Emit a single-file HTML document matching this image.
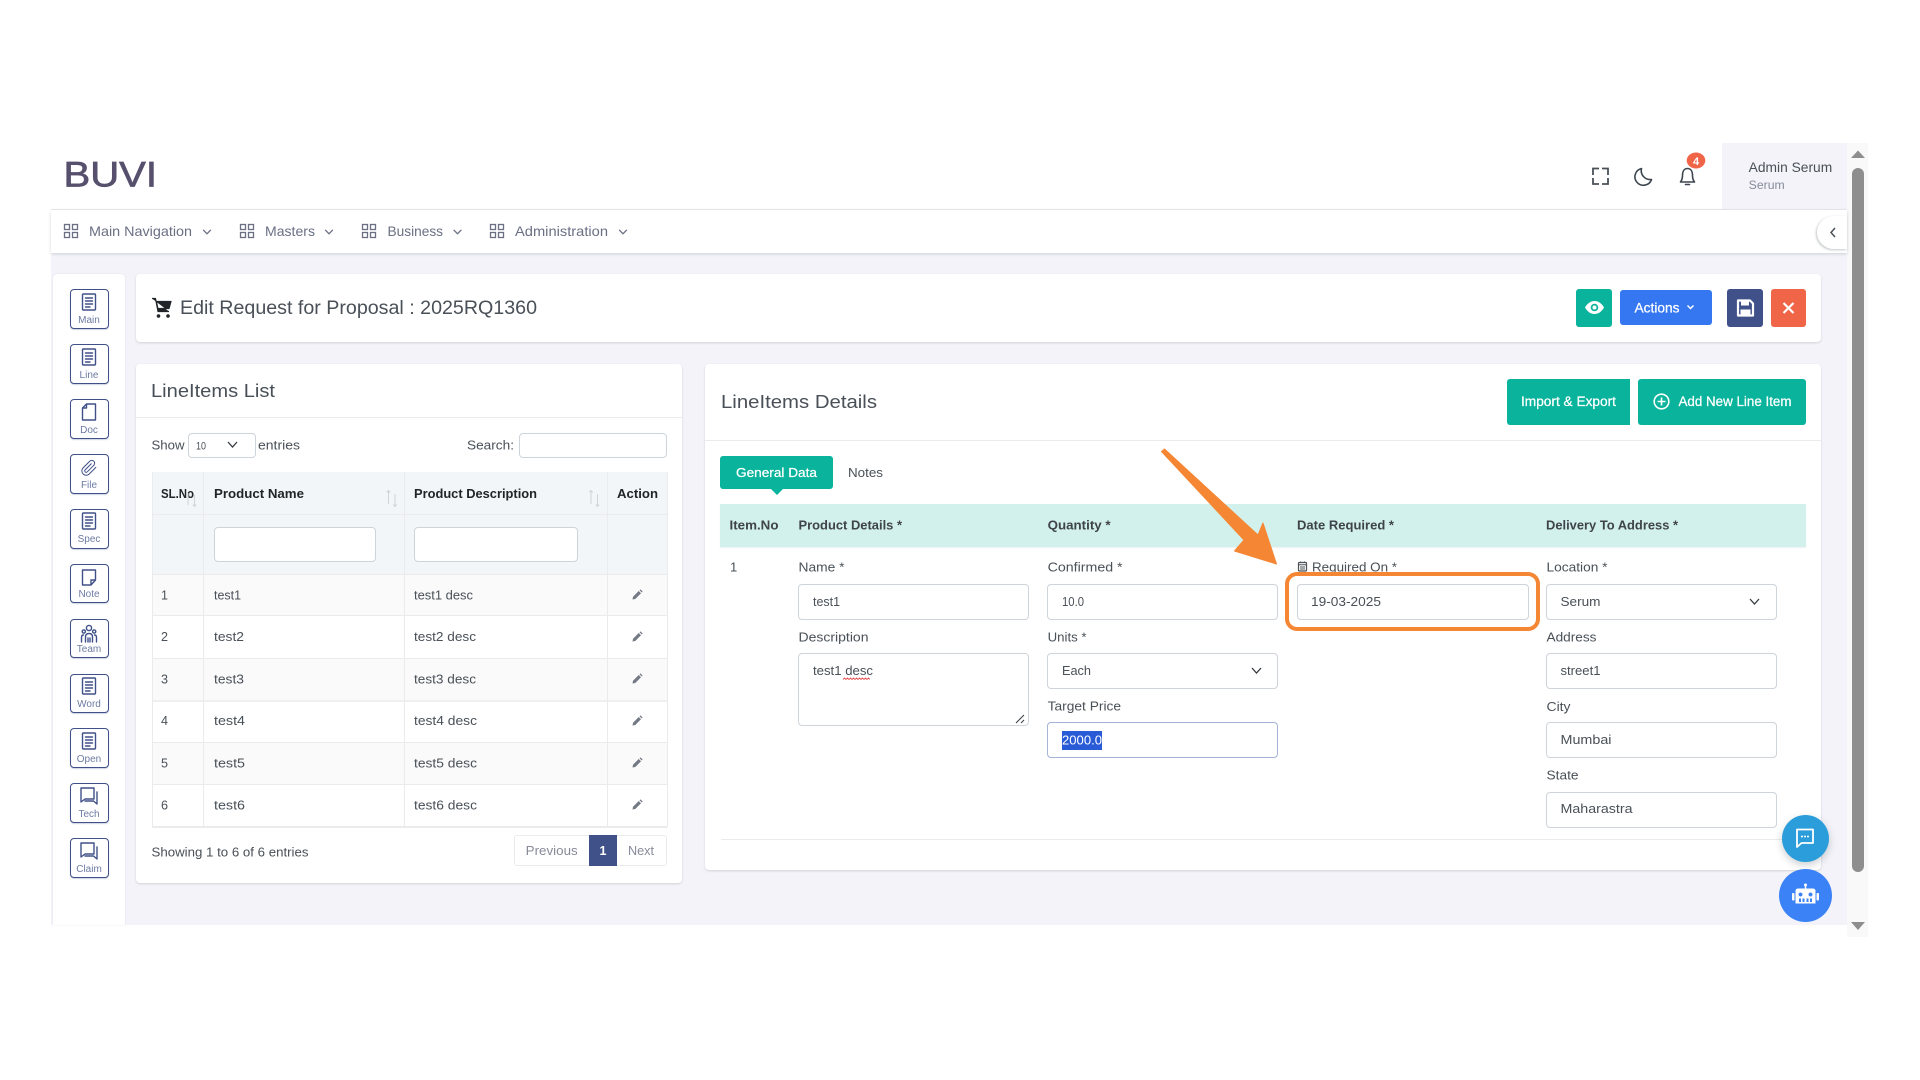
<!DOCTYPE html>
<html lang="en"><head><meta charset="utf-8"><title>Edit Request for Proposal</title>
<style>
html,body{margin:0;padding:0;width:1920px;height:1080px;background:#fff;overflow:hidden;font-family:"Liberation Sans",sans-serif}
.b{position:absolute;box-sizing:border-box}
.card{background:#fff;border-radius:4px;box-shadow:0 1px 2px rgba(56,65,74,.18)}
.in{background:#fff;border:1px solid #ced4da;border-radius:4px}
.sb{background:#fff;border:1.5px solid #405189;border-radius:4px;left:69.5px;width:39px;height:39.5px;box-shadow:0 1px 1px rgba(64,81,137,.25)}
svg{position:absolute;left:0;top:0}
text{font-family:"Liberation Sans",sans-serif}
.nav{font-size:14px;fill:#6a6f84}
.lbl{font-size:13px;fill:#495057}
.val{font-size:13px;fill:#495057}
.th{font-size:12.5px;font-weight:700;fill:#212529}
.td{font-size:12.5px;fill:#495057}
.gh{font-size:13px;font-weight:700;fill:#3f444a}
.sl{font-size:10px;fill:#6d7ba3;text-anchor:middle}
.ic{fill:none;stroke:#405189;stroke-width:1.4;stroke-linecap:round;stroke-linejoin:round}
.gr{fill:none;stroke:#6a6f84;stroke-width:1.3}
.ch{fill:none;stroke:#6a6f84;stroke-width:1.3;stroke-linecap:round;stroke-linejoin:round}
.h{font-size:18.5px;fill:#495057}
.w{fill:#fff}
.sort{stroke:#ced4da;stroke-width:1;fill:none}
</style></head><body>
<!-- app backdrop -->
<div class="b" style="left:51px;top:253px;width:1796px;height:672px;background:#f3f3f9"></div>
<div class="b" style="left:1847px;top:143px;width:21px;height:794px;background:#f9f9f9"></div>
<div class="b" style="left:1852px;top:168px;width:12px;height:704px;background:#8e8e8e;border-radius:6px"></div>
<div class="b" style="left:51px;top:143px;width:1796px;height:67px;background:#fff;border-bottom:1px solid #e9ebec"></div>
<div class="b" style="left:1722px;top:143px;width:125px;height:66px;background:#f3f3f9"></div>
<div class="b" style="left:51px;top:210px;width:1796px;height:43px;background:#fff;box-shadow:0 1px 3px rgba(56,65,74,.2)"></div>
<div class="b" style="left:1817px;top:216px;width:30px;height:33px;background:#fff;border-radius:17px 0 0 17px;box-shadow:-1px 1px 2px rgba(56,65,74,.3)"></div>
<!-- sidebar -->
<div class="b" style="left:53px;top:274px;width:72px;height:651px;background:#fff;border-radius:4px 4px 0 0;box-shadow:0 0 1px rgba(56,65,74,.2)"></div>
<div class="b sb" style="top:289px"></div><div class="b sb" style="top:344px"></div><div class="b sb" style="top:399px"></div><div class="b sb" style="top:454px"></div><div class="b sb" style="top:509px"></div><div class="b sb" style="top:563.5px"></div><div class="b sb" style="top:618.5px"></div><div class="b sb" style="top:673.5px"></div><div class="b sb" style="top:728px"></div><div class="b sb" style="top:783px"></div><div class="b sb" style="top:838px"></div>
<!-- cards -->
<div class="b card" style="left:136px;top:274px;width:1685px;height:68px"></div>
<div class="b card" style="left:136px;top:364px;width:546px;height:519px"></div>
<div class="b card" style="left:705px;top:364px;width:1116px;height:506px"></div>
<div class="b" style="left:136px;top:416.5px;width:546px;height:1px;background:#e9ebec"></div>
<div class="b" style="left:705px;top:440px;width:1116px;height:1px;background:#e9ebec"></div>
<div class="b" style="left:721px;top:839px;width:1085px;height:1px;background:#e9ebec"></div>
<!-- header buttons -->
<div class="b" style="left:1576px;top:289px;width:36px;height:38px;background:#0ab39c;border-radius:3px"></div>
<div class="b" style="left:1620px;top:290px;width:92px;height:35px;background:#3577f1;border-radius:3px"></div>
<div class="b" style="left:1727px;top:289px;width:36px;height:38px;background:#405189;border-radius:3px"></div>
<div class="b" style="left:1771px;top:289px;width:35px;height:38px;background:#f06548;border-radius:3px"></div>
<div class="b" style="left:1507px;top:379px;width:123px;height:46px;background:#0ab39c;border-radius:3px 0 0 3px"></div>
<div class="b" style="left:1638px;top:379px;width:168px;height:46px;background:#0ab39c;border-radius:3px"></div>
<!-- list controls -->
<div class="b in" style="left:187.5px;top:433px;width:68px;height:25px"></div>
<div class="b in" style="left:519px;top:433px;width:148px;height:25px"></div>
<!-- table -->
<div class="b" style="left:151.5px;top:472px;width:515.5px;height:102px;background:#f3f6f9"></div>
<div class="b" style="left:151.5px;top:574px;width:515.5px;height:41px;background:#fafafa"></div>
<div class="b" style="left:151.5px;top:658px;width:515.5px;height:42px;background:#fafafa"></div>
<div class="b" style="left:151.5px;top:742px;width:515.5px;height:42px;background:#fafafa"></div>
<div class="b" style="left:151.5px;top:514px;width:515.5px;height:1px;background:#e9ebec"></div>
<div class="b" style="left:151.5px;top:574px;width:515.5px;height:1px;background:#e9ebec"></div>
<div class="b" style="left:151.5px;top:615px;width:515.5px;height:1px;background:#e9ebec"></div>
<div class="b" style="left:151.5px;top:658px;width:515.5px;height:1px;background:#e9ebec"></div>
<div class="b" style="left:151.5px;top:700px;width:515.5px;height:2px;background:#eef0f2"></div>
<div class="b" style="left:151.5px;top:742px;width:515.5px;height:1px;background:#e9ebec"></div>
<div class="b" style="left:151.5px;top:784px;width:515.5px;height:1px;background:#e9ebec"></div>
<div class="b" style="left:151.5px;top:826px;width:515.5px;height:2px;background:#e9ebec"></div>
<div class="b" style="left:151.5px;top:472px;width:1px;height:355px;background:#e9ebec"></div>
<div class="b" style="left:203px;top:472px;width:1px;height:355px;background:#e9ebec"></div>
<div class="b" style="left:404px;top:472px;width:1px;height:355px;background:#e9ebec"></div>
<div class="b" style="left:607px;top:472px;width:1px;height:355px;background:#e9ebec"></div>
<div class="b" style="left:666.5px;top:472px;width:1px;height:355px;background:#e9ebec"></div>
<div class="b in" style="left:214px;top:527px;width:162px;height:35px"></div>
<div class="b in" style="left:414px;top:527px;width:164px;height:35px"></div>
<!-- pagination -->
<div class="b" style="left:513.5px;top:835px;width:153.5px;height:31px;background:#fff;border:1px solid #e9ebec;border-radius:3px"></div>
<div class="b" style="left:589px;top:835px;width:28px;height:31px;background:#405189"></div>
<!-- tabs -->
<div class="b" style="left:720px;top:456px;width:113px;height:33px;background:#0ab39c;border-radius:3px"></div>
<div class="b" style="left:720px;top:504px;width:1086px;height:43px;background:#d2f1ec;box-shadow:0 1px 1px rgba(56,65,74,.08)"></div>
<!-- form fields -->
<div class="b in" style="left:798px;top:584px;width:231px;height:36px"></div>
<div class="b in" style="left:798px;top:653px;width:231px;height:73px"></div>
<div class="b in" style="left:1047px;top:584px;width:231px;height:36px"></div>
<div class="b in" style="left:1047px;top:653px;width:231px;height:36px"></div>
<div class="b in" style="left:1047px;top:722px;width:231px;height:36px;border-color:#a6b2d6"></div>
<div class="b in" style="left:1297px;top:584px;width:232px;height:36px"></div>
<div class="b in" style="left:1546px;top:584px;width:231px;height:36px"></div>
<div class="b in" style="left:1546px;top:653px;width:231px;height:36px"></div>
<div class="b in" style="left:1546px;top:722px;width:231px;height:36px"></div>
<div class="b in" style="left:1546px;top:792px;width:231px;height:36px"></div>
<div class="b" style="left:1062px;top:731px;width:40px;height:19px;background:#2a5bd7"></div>
<!-- floating buttons -->
<div class="b" style="left:1781.5px;top:815px;width:47px;height:47px;border-radius:50%;background:#2a9dda;box-shadow:0 3px 8px rgba(56,65,74,.25)"></div>
<div class="b" style="left:1779px;top:869px;width:53px;height:53px;border-radius:50%;background:#3b82f6"></div>

<svg width="1920" height="1080" viewBox="0 0 1920 1080" xmlns="http://www.w3.org/2000/svg">
<defs>
<g id="list" class="ic"><rect x="-6.5" y="-8" width="13" height="16" rx="1"/><path d="M-3.5-4H3.5M-3.5-1H3.5M-3.5 2H3.5M-3.5 5H1"/></g>
<g id="grid" class="gr"><rect x="0.5" y="0.5" width="5" height="5"/><rect x="8.5" y="0.5" width="5" height="5"/><rect x="0.5" y="8.5" width="5" height="5"/><rect x="8.5" y="8.5" width="5" height="5"/></g>
<g id="qa" class="ic"><path d="M-8-8H5V3H-4L-8 6Z"/><path d="M8-4V8L4.5 5H-4"/></g>
<path id="pen" d="M-4.5 4.5L-4 1.7L1.7-4L4-1.7L-1.7 4L-4.5 4.5ZM2.5-4.8L3.5-5.6L5.6-3.5L4.8-2.5Z" fill="#737a84"/>
<path id="cv" d="M-3.5-1.8L0 1.8L3.5-1.8"/>
</defs>

<!-- logo -->
<text x="63.500" y="186.500" font-size="35" textLength="93.500" lengthAdjust="spacingAndGlyphs" fill="#57506c" stroke="#57506c" stroke-width=".7">BUVI</text>

<!-- nav -->
<use href="#grid" x="64" y="224"/><text class="nav" x="89" y="236" textLength="103" lengthAdjust="spacingAndGlyphs">Main Navigation</text><use href="#cv" class="ch" x="207" y="232"/>
<use href="#grid" x="240" y="224"/><text class="nav" x="265" y="236" textLength="50" lengthAdjust="spacingAndGlyphs">Masters</text><use href="#cv" class="ch" x="329" y="232"/>
<use href="#grid" x="362" y="224"/><text class="nav" x="387.5" y="236" textLength="55.5" lengthAdjust="spacingAndGlyphs">Business</text><use href="#cv" class="ch" x="457.5" y="232"/>
<use href="#grid" x="490" y="224"/><text class="nav" x="515" y="236" textLength="93" lengthAdjust="spacingAndGlyphs">Administration</text><use href="#cv" class="ch" x="623" y="232"/>

<!-- top right icons -->
<path d="M1593 175V168.500H1599M1602 168.500H1608V175M1608 178V184H1602M1599 184H1593V178" fill="none" stroke="#495057" stroke-width="1.800"/>
<path d="M1641.500 168.500A8.500 8.500 0 1 0 1651.500 179.500A9 9 0 0 1 1641.500 168.500Z" fill="none" stroke="#3d4650" stroke-width="1.600" stroke-linejoin="round"/>
<path d="M1680.500 182C1682 180 1682.500 178.500 1682.500 175.500C1682.500 171.500 1684 168.500 1687.500 168.500C1691 168.500 1692.500 171.500 1692.500 175.500C1692.500 178.500 1693 180 1694.500 182ZM1685.500 184.500H1689.500" fill="none" stroke="#3d4650" stroke-width="1.600" stroke-linejoin="round" stroke-linecap="round"/>
<ellipse cx="1696" cy="160.500" rx="9.300" ry="8" fill="#f06548"/>
<text x="1696" y="165" font-size="11" font-weight="700" fill="#fff" text-anchor="middle">4</text>
<text x="1748.700" y="172" font-size="13.500" textLength="83.500" lengthAdjust="spacingAndGlyphs" fill="#495057">Admin Serum</text>
<text x="1748.700" y="189" font-size="11.500" textLength="36" lengthAdjust="spacingAndGlyphs" fill="#878a99">Serum</text>
<path d="M1835 228L1831 232.500L1835 237" fill="none" stroke="#495057" stroke-width="1.500"/>

<!-- scrollbar arrows -->
<path d="M1851 158L1858 150.500L1865 158Z" fill="#8e8e8e"/>
<path d="M1851 922L1858 930L1865 922Z" fill="#8e8e8e"/>

<!-- sidebar icons -->
<use href="#list" x="89" y="302"/><text class="sl" x="89" y="323">Main</text>
<use href="#list" x="89" y="357"/><text class="sl" x="89" y="378">Line</text>
<path class="ic" d="M86.500 404H95.500V420H82.500V408ZM86.500 404V408H82.500"/><text class="sl" x="89" y="433">Doc</text>
<path class="ic" transform="translate(80.400 459.400) scale(.72)" stroke-width="1.900" d="M21.440 11.050l-9.190 9.190a6 6 0 0 1-8.490-8.490l9.190-9.190a4 4 0 0 1 5.660 5.660l-9.200 9.190a2 2 0 0 1-2.830-2.830l8.490-8.480"/><text class="sl" x="89" y="488">File</text>
<use href="#list" x="89" y="521"/><text class="sl" x="89" y="542">Spec</text>
<path class="ic" d="M82.500 570H95.500V580L91 585H82.500ZM95.500 580H91V585"/><text class="sl" x="89" y="597">Note</text>
<g class="ic" stroke-width="1.200"><circle cx="89" cy="628" r="2.600"/><circle cx="83.800" cy="631.500" r="1.600"/><circle cx="94.200" cy="631.500" r="1.600"/><path d="M85.500 642V637C85.500 634.500 87 633.500 89 633.500C91 633.500 92.500 634.500 92.500 637V642M81.500 642V637.500C81.500 635.500 82.500 635 83.500 635M96.500 642V637.500C96.500 635.500 95.500 635 94.500 635M88 638V642M90 638V642"/></g><text class="sl" x="89" y="652">Team</text>
<use href="#list" x="89" y="686"/><text class="sl" x="89" y="707">Word</text>
<use href="#list" x="89" y="741"/><text class="sl" x="89" y="762">Open</text>
<use href="#qa" x="89" y="796"/><text class="sl" x="89" y="817">Tech</text>
<use href="#qa" x="89" y="851"/><text class="sl" x="89" y="872">Claim</text>

<!-- page title -->
<path d="M152 298.500H155.500L158 311.500H169M156.500 301.500H171L169 308.500H157.800Z" fill="#212529" stroke="#212529" stroke-width="1.200" stroke-linejoin="round"/><circle cx="158.500" cy="316" r="1.800" fill="#212529"/><circle cx="168" cy="316" r="1.800" fill="#212529"/>
<text x="180" y="314" font-size="19.500" textLength="357" lengthAdjust="spacingAndGlyphs" fill="#495057">Edit Request for Proposal : 2025RQ1360</text>

<!-- header buttons content -->
<path d="M1585 307.500C1587.500 303 1591 301 1594.500 301C1598 301 1601.500 303 1604 307.500C1601.500 312 1598 314 1594.500 314C1591 314 1587.500 312 1585 307.500Z" fill="#fff"/><circle cx="1594.500" cy="307.500" r="3.800" fill="#0ab39c"/><circle cx="1594.500" cy="307.500" r="2" fill="#fff"/>
<text class="w" x="1634.500" y="312.500" font-size="13.500" textLength="45" lengthAdjust="spacingAndGlyphs" stroke="#fff" stroke-width=".25">Actions</text>
<path d="M1687.500 305.500L1690.500 308.500L1693.500 305.500" fill="none" stroke="#fff" stroke-width="1.500"/>
<path d="M1738 300.500H1750L1753 303.500V315.500H1738Z" fill="none" stroke="#fff" stroke-width="2.200" stroke-linejoin="round"/><rect x="1741" y="300.500" width="8" height="5" fill="#fff"/><rect x="1740.500" y="309.500" width="10" height="6" fill="#fff"/>
<path d="M1783.500 303L1793.500 313M1793.500 303L1783.500 313" stroke="#fff" stroke-width="2.200"/>

<!-- list card text -->
<text class="h" x="151" y="397" textLength="124" lengthAdjust="spacingAndGlyphs">LineItems List</text>
<text class="td" x="151.500" y="449.500" textLength="33" lengthAdjust="spacingAndGlyphs">Show</text>
<text x="196" y="449.500" font-size="11" textLength="10" lengthAdjust="spacingAndGlyphs" fill="#495057">10</text>
<path d="M228 442L232.500 447L237 442" fill="none" stroke="#343a40" stroke-width="1.300"/>
<text class="td" x="258" y="449.500" textLength="42" lengthAdjust="spacingAndGlyphs">entries</text>
<text class="td" x="467" y="449.500" textLength="47" lengthAdjust="spacingAndGlyphs">Search:</text>

<!-- table head -->
<text class="th" x="161" y="498" textLength="33" lengthAdjust="spacingAndGlyphs">SL.No</text>
<text class="th" x="214" y="498" textLength="90" lengthAdjust="spacingAndGlyphs">Product Name</text>
<text class="th" x="414" y="498" textLength="123" lengthAdjust="spacingAndGlyphs">Product Description</text>
<text class="th" x="617" y="498" textLength="41" lengthAdjust="spacingAndGlyphs">Action</text>
<path class="sort" d="M188 505V493M194.500 495V506M192.800 504.500L194.500 506.500L196.200 504.500"/>
<path class="sort" d="M388.500 504V491M386.800 492.500L388.500 490.500L390.200 492.500M395 494V506M393.300 504.500L395 506.500L396.700 504.500"/>
<path class="sort" d="M591 504V491M589.300 492.500L591 490.500L592.700 492.500M597.500 494V506M595.800 504.500L597.500 506.500L599.200 504.500"/>

<!-- table rows -->
<g class="td">
<text x="161" y="599.500">1</text><text x="214" y="599.500" textLength="27" lengthAdjust="spacingAndGlyphs">test1</text><text x="414" y="599.500" textLength="59" lengthAdjust="spacingAndGlyphs">test1 desc</text>
<text x="161" y="641" textLength="7" lengthAdjust="spacingAndGlyphs">2</text><text x="214" y="641" textLength="30" lengthAdjust="spacingAndGlyphs">test2</text><text x="414" y="641" textLength="62" lengthAdjust="spacingAndGlyphs">test2 desc</text>
<text x="161" y="683.500" textLength="7" lengthAdjust="spacingAndGlyphs">3</text><text x="214" y="683.500" textLength="30" lengthAdjust="spacingAndGlyphs">test3</text><text x="414" y="683.500" textLength="62" lengthAdjust="spacingAndGlyphs">test3 desc</text>
<text x="161" y="725" textLength="7" lengthAdjust="spacingAndGlyphs">4</text><text x="214" y="725" textLength="31" lengthAdjust="spacingAndGlyphs">test4</text><text x="414" y="725" textLength="63" lengthAdjust="spacingAndGlyphs">test4 desc</text>
<text x="161" y="767.500" textLength="7" lengthAdjust="spacingAndGlyphs">5</text><text x="214" y="767.500" textLength="31" lengthAdjust="spacingAndGlyphs">test5</text><text x="414" y="767.500" textLength="63" lengthAdjust="spacingAndGlyphs">test5 desc</text>
<text x="161" y="809.500" textLength="7" lengthAdjust="spacingAndGlyphs">6</text><text x="214" y="809.500" textLength="31" lengthAdjust="spacingAndGlyphs">test6</text><text x="414" y="809.500" textLength="63" lengthAdjust="spacingAndGlyphs">test6 desc</text>
</g>
<use href="#pen" x="637" y="595"/><use href="#pen" x="637" y="637"/><use href="#pen" x="637" y="679"/><use href="#pen" x="637" y="721"/><use href="#pen" x="637" y="763"/><use href="#pen" x="637" y="805"/>
<text class="td" x="151.500" y="856.500" textLength="157" lengthAdjust="spacingAndGlyphs">Showing 1 to 6 of 6 entries</text>
<text x="525.700" y="855" font-size="12.500" fill="#878a99" textLength="52" lengthAdjust="spacingAndGlyphs">Previous</text>
<text x="603" y="855" font-size="12.500" font-weight="700" fill="#fff" text-anchor="middle">1</text>
<text x="628" y="855" font-size="12.500" fill="#878a99" textLength="26" lengthAdjust="spacingAndGlyphs">Next</text>

<!-- details card text -->
<text class="h" x="721" y="408" textLength="156" lengthAdjust="spacingAndGlyphs">LineItems Details</text>
<text class="w" x="1521" y="406" font-size="13.500" textLength="95" lengthAdjust="spacingAndGlyphs" stroke="#fff" stroke-width=".25">Import &amp; Export</text>
<circle cx="1661.500" cy="401.500" r="7.300" fill="none" stroke="#fff" stroke-width="1.600"/><path d="M1661.500 397.500V405.500M1657.500 401.500H1665.500" stroke="#fff" stroke-width="1.600"/>
<text class="w" x="1678.500" y="406" font-size="13.500" textLength="113" lengthAdjust="spacingAndGlyphs" stroke="#fff" stroke-width=".25">Add New Line Item</text>

<!-- tabs -->
<path d="M771 489H783L777 495Z" fill="#0ab39c"/>
<text class="w" x="736" y="477" font-size="13" textLength="81" lengthAdjust="spacingAndGlyphs" stroke="#fff" stroke-width=".25">General Data</text>
<text x="848" y="477" font-size="13" textLength="35" lengthAdjust="spacingAndGlyphs" fill="#495057">Notes</text>

<!-- grid head -->
<text class="gh" x="729.500" y="529.500" textLength="49" lengthAdjust="spacingAndGlyphs">Item.No</text>
<text class="gh" x="798.500" y="529.500" textLength="103.500" lengthAdjust="spacingAndGlyphs">Product Details *</text>
<text class="gh" x="1047.600" y="529.500" textLength="63" lengthAdjust="spacingAndGlyphs">Quantity *</text>
<text class="gh" x="1297" y="529.500" textLength="97" lengthAdjust="spacingAndGlyphs">Date Required *</text>
<text class="gh" x="1546" y="529.500" textLength="132" lengthAdjust="spacingAndGlyphs">Delivery To Address *</text>

<!-- labels -->
<text class="lbl" x="730" y="571.500">1</text>
<text class="lbl" x="798.500" y="571.500" textLength="46" lengthAdjust="spacingAndGlyphs">Name *</text>
<text class="lbl" x="1047.600" y="571.500" textLength="75" lengthAdjust="spacingAndGlyphs">Confirmed *</text>
<rect x="1298.500" y="562.500" width="8" height="8.500" rx="1" fill="none" stroke="#495057" stroke-width="1.200"/><path d="M1298.500 564.800H1306.500M1300.500 561.500V563M1304.500 561.500V563M1300 567H1305M1300 569H1305" stroke="#495057" stroke-width="1"/>
<text class="lbl" x="1312" y="571.500" textLength="85" lengthAdjust="spacingAndGlyphs">Required On *</text>
<text class="lbl" x="1546.500" y="571.500" textLength="61" lengthAdjust="spacingAndGlyphs">Location *</text>
<text class="lbl" x="798.500" y="641.500" textLength="70" lengthAdjust="spacingAndGlyphs">Description</text>
<text class="lbl" x="1047.600" y="641.500" textLength="39" lengthAdjust="spacingAndGlyphs">Units *</text>
<text class="lbl" x="1047.600" y="710.500" textLength="73.500" lengthAdjust="spacingAndGlyphs">Target Price</text>
<text class="lbl" x="1546.500" y="641.500" textLength="50" lengthAdjust="spacingAndGlyphs">Address</text>
<text class="lbl" x="1546.500" y="711" textLength="24" lengthAdjust="spacingAndGlyphs">City</text>
<text class="lbl" x="1546.500" y="779.500" textLength="32" lengthAdjust="spacingAndGlyphs">State</text>

<!-- values -->
<text class="val" x="813" y="606" textLength="27" lengthAdjust="spacingAndGlyphs">test1</text>
<text class="val" x="813" y="675" textLength="60" lengthAdjust="spacingAndGlyphs">test1 desc</text>
<path d="M843 679.500l1.500-1.500 1.500 1.500 1.500-1.500 1.500 1.500 1.500-1.500 1.500 1.500 1.500-1.500 1.500 1.500 1.500-1.500 1.500 1.500 1.500-1.500 1.500 1.500 1.500-1.500 1.500 1.500 1.500-1.500 1.500 1.500 1.500-1.500 1.500 1.500" fill="none" stroke="#e04040" stroke-width=".8"/>
<path d="M1016 723L1024 715M1021 723L1024 720" stroke="#343a40" stroke-width="1"/>
<text class="val" x="1062" y="606" textLength="22" lengthAdjust="spacingAndGlyphs">10.0</text>
<text class="val" x="1062" y="675" textLength="29" lengthAdjust="spacingAndGlyphs">Each</text>
<path d="M1252 668L1256.500 673L1261 668" fill="none" stroke="#343a40" stroke-width="1.300"/>
<text x="1062" y="744.500" font-size="13" textLength="40" lengthAdjust="spacingAndGlyphs" fill="#fff">2000.0</text>
<text class="val" x="1311" y="606" textLength="70" lengthAdjust="spacingAndGlyphs">19-03-2025</text>
<text class="val" x="1560.500" y="606" textLength="40" lengthAdjust="spacingAndGlyphs">Serum</text>
<path d="M1750 599L1754.500 604L1759 599" fill="none" stroke="#343a40" stroke-width="1.300"/>
<text class="val" x="1560.500" y="675" textLength="40" lengthAdjust="spacingAndGlyphs">street1</text>
<text class="val" x="1560.500" y="744" textLength="51" lengthAdjust="spacingAndGlyphs">Mumbai</text>
<text class="val" x="1560.500" y="813" textLength="72" lengthAdjust="spacingAndGlyphs">Maharastra</text>

<!-- annotation -->
<rect x="1287" y="574" width="251" height="55" rx="10" fill="none" stroke="#f58634" stroke-width="4"/>
<path d="M1161.500 451.500L1164.500 449L1258 535L1263 523L1276.500 564L1234.500 551L1244 540Z" fill="#f58634" stroke="#f58634" stroke-width="1" stroke-linejoin="round"/>

<!-- chat fab -->
<path d="M1797 829.500H1813V843H1801.500L1797 847Z" fill="none" stroke="#fff" stroke-width="1.800" stroke-linejoin="round"/><path d="M1801 836.500H1803M1804 836.500H1806M1807 836.500H1809" stroke="#fff" stroke-width="1.600"/>
<!-- robot fab -->
<g fill="#fff" transform="translate(0 1)"><circle cx="1805.500" cy="884" r="1.500"/><rect x="1804.800" y="884" width="1.400" height="4"/><path fill-rule="evenodd" d="M1798 887.500H1813C1814.500 887.500 1815.500 888.500 1815.500 890V902.500H1795.500V890C1795.500 888.500 1796.500 887.500 1798 887.500ZM1800.500 891.500a2 2 0 1 0 .01 0ZM1810.500 891.500a2 2 0 1 0 .01 0ZM1799 897.500V901H1801V897.500ZM1802.500 897.500V901H1804.500V897.500ZM1806.500 897.500V901H1808.500V897.500ZM1810 897.500V901H1812V897.500Z"/><rect x="1792" y="892" width="2.500" height="7.500" rx="1"/><rect x="1816.500" y="892" width="2.500" height="7.500" rx="1"/></g>
</svg>
</body></html>
